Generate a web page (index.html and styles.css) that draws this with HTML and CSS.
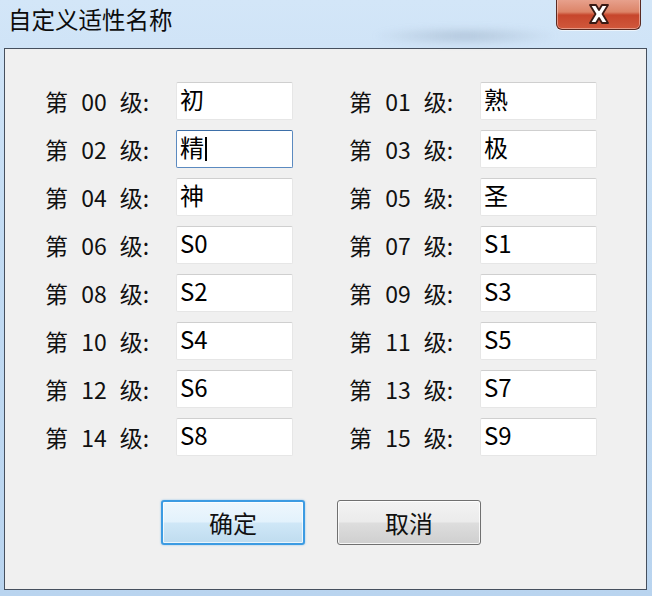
FILE: index.html
```html
<!DOCTYPE html>
<html lang="zh-CN">
<head>
<meta charset="utf-8">
<title>自定义适性名称</title>
<link rel="stylesheet" href="styles.css">
</head>
<body>
<div class="window">
  <div class="titlebar">
    <div class="title">自定义适性名称</div>
    <div class="blur"></div>
    <div class="close">
      <svg width="30" height="24" viewBox="0 0 30 24">
        <path d="M6 3 L12 3 L15 8 L18 3 L24 3 L18.5 12 L24 21 L18 21 L15 16 L12 21 L6 21 L11.5 12 Z" fill="#ffffff" stroke="#3a1a14" stroke-width="1.8" stroke-linejoin="round"/>
      </svg>
    </div>
  </div>
  <div class="panel">
    <div class="grid">
      <div class="field"><span class="label">第 00 级:</span><div class="input">初</div></div>
      <div class="field"><span class="label">第 01 级:</span><div class="input">熟</div></div>
      <div class="field"><span class="label">第 02 级:</span><div class="input focus">精<span class="caret"></span></div></div>
      <div class="field"><span class="label">第 03 级:</span><div class="input">极</div></div>
      <div class="field"><span class="label">第 04 级:</span><div class="input">神</div></div>
      <div class="field"><span class="label">第 05 级:</span><div class="input">圣</div></div>
      <div class="field"><span class="label">第 06 级:</span><div class="input">S0</div></div>
      <div class="field"><span class="label">第 07 级:</span><div class="input">S1</div></div>
      <div class="field"><span class="label">第 08 级:</span><div class="input">S2</div></div>
      <div class="field"><span class="label">第 09 级:</span><div class="input">S3</div></div>
      <div class="field"><span class="label">第 10 级:</span><div class="input">S4</div></div>
      <div class="field"><span class="label">第 11 级:</span><div class="input">S5</div></div>
      <div class="field"><span class="label">第 12 级:</span><div class="input">S6</div></div>
      <div class="field"><span class="label">第 13 级:</span><div class="input">S7</div></div>
      <div class="field"><span class="label">第 14 级:</span><div class="input">S8</div></div>
      <div class="field"><span class="label">第 15 级:</span><div class="input">S9</div></div>
    </div>
    <div class="buttons">
      <div class="btn primary">确定</div>
      <div class="btn">取消</div>
    </div>
  </div>
</div>
</body>
</html>
```
FILE: styles.css
```css
* { box-sizing: border-box; }
html, body { margin: 0; padding: 0; }
body {
  width: 652px;
  height: 596px;
  overflow: hidden;
  font-family: "Noto Sans CJK SC", "Liberation Sans", sans-serif;
  color: #111;
}
.window {
  width: 652px;
  height: 596px;
  display: flex;
  flex-direction: column;
  background: linear-gradient(180deg, #d3e6f8 0%, #c2dbf3 40%, #b9d4ef 100%);
}
.titlebar {
  height: 48px;
  flex: none;
  position: relative;
  display: flex;
  align-items: flex-start;
}
.title {
  margin: 4px 0 0 8px;
  font-size: 23.5px;
  line-height: 30px;
  color: #0c0c0c;
}
.blur {
  position: absolute;
  left: 370px;
  top: 26px;
  width: 190px;
  height: 20px;
  background: radial-gradient(ellipse at center, rgba(120,140,165,0.35), rgba(120,140,165,0) 70%);
  filter: blur(3px);
}
.close {
  position: absolute;
  left: 556px;
  top: -2px;
  width: 85px;
  height: 32px;
  border: 1px solid #5a2a22;
  border-top: none;
  border-radius: 0 0 6px 6px;
  background: linear-gradient(180deg, #e9a592 0%, #dc8468 45%, #c7462c 55%, #d0583c 100%);
  box-shadow: inset 0 0 0 1px rgba(255,220,210,0.5), 0 1px 0 rgba(255,255,255,0.6);
  display: flex;
  align-items: center;
  justify-content: center;
}
.close svg { margin-top: 1px; }
.panel {
  flex: 1;
  margin: 0 5px 6px 4px;
  border: 1px solid #46505e;
  background: #f0f0f0;
  display: flex;
  flex-direction: column;
}
.grid {
  display: grid;
  grid-template-columns: 248px 248px;
  column-gap: 56px;
  row-gap: 10px;
  padding: 33px 0 0 40px;
}
.field {
  display: flex;
  align-items: center;
  height: 38px;
}
.label {
  width: 131px;
  flex: none;
  font-size: 23px;
  word-spacing: 8px;
  line-height: 38px;
  color: #111;
  white-space: pre;
}
.input {
  width: 117px;
  height: 38px;
  flex: none;
  background: #fff;
  border: 1px solid #e6e6e6;
  border-top-color: #cfcfcf;
  border-radius: 2px;
  font-size: 24px;
  line-height: 30px;
  padding: 1px 0 0 3px;
  color: #000;
  position: relative;
}
.input.focus {
  border-color: #5b8ac0;
  border-top-color: #3d6fa8;
}
.caret {
  display: inline-block;
  width: 2px;
  height: 24px;
  background: #000;
  vertical-align: -4px;
  margin-left: 1px;
}
.buttons {
  display: flex;
  gap: 32px;
  padding: 44px 0 0 156px;
}
.btn {
  width: 144px;
  height: 45px;
  border: 1px solid #707070;
  border-radius: 3px;
  background: linear-gradient(180deg, #f3f3f3 0%, #ebebeb 48%, #dddddd 52%, #cfcfcf 100%);
  box-shadow: inset 0 0 0 1px rgba(255,255,255,0.8);
  display: flex;
  align-items: center;
  justify-content: center;
  font-size: 24px;
  color: #111;
}
.btn.primary {
  border: 2px solid #3c9be2;
  background: linear-gradient(180deg, #eef7fd 0%, #e3f2fc 48%, #cfe7f7 52%, #bfdcef 100%);
  box-shadow: inset 0 0 0 1px rgba(255,255,255,0.7), 0 0 2px rgba(60,155,226,0.6);
}
```
